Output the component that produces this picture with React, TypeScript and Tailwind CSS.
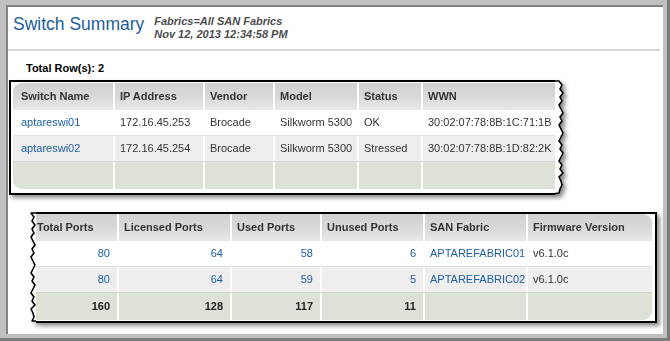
import React from "react"

const font = { fontFamily: '"Liberation Sans", Arial, sans-serif' }

const wiggle = [0, 3, 1, 4, 1, 3, 0, 2, 4, 1, 3, 0, 2, 4, 2, 0, 3, 1, 4, 2, 0, 3, 1, 4, 0, 2, 3, 1]

// torn-paper edge, drawn as a closed shape so the drop shadow follows it
function TornEdge({ height, side }: { height: number, side: "left" | "right" }) {
  const pts: string[] = []
  const steps = Math.floor(height / 4)
  for (let i = 0; i <= steps; i++) {
    const y = Math.min(1 + i * 4, height - 1)
    const o = wiggle[i % wiggle.length]
    pts.push(side === "right" ? `${4 + o},${y}` : `${1 + o},${y}`)
  }
  const inner = side === "right" ? -3 : 12
  const poly = [`${inner},1`, ...pts, `${inner},${height - 1}`].join(" ")
  return (
    <svg width={side === "right" ? 12 : 6} height={height} className="block shrink-0">
      <polygon points={poly} fill="white" stroke="black" strokeWidth="1.6" strokeLinejoin="round" />
    </svg>
  )
}

type Cell = { text: string, link?: boolean, right?: boolean, bold?: boolean }

function Grid({ cols, header, rows, footer, firstPad, rounded }: {
  cols: string, header: string[], rows: Cell[][], footer: Cell[], firstPad: string, rounded: string
}) {
  const rowClass = (i: number) => i === 0 ? "bg-white border-b border-[#e2e2e2]" : "bg-[#eeeeee] border-b border-[#d4d4d4]"
  const cellPad = (c: number) => c === 0 ? firstPad : "border-l-2 border-white"
  return (
    <div className={`overflow-hidden ${rounded}`}>
      <div className={`grid ${cols} h-[27px] bg-linear-to-b from-[#d0d0d0] via-[#d9d9d9] to-[#e8e8e8] font-bold text-[#333]`}>
        {header.map((h, c) => (
          <div key={h} className={`flex items-center ${cellPad(c)}`}><span className={c === 0 ? "" : "pl-[5px]"}>{h}</span></div>
        ))}
      </div>
      {rows.map((r, i) => (
        <div key={i} className={`grid ${cols} h-[26px] ${rowClass(i)}`}>
          {r.map((cell, c) => (
            <div key={c} className={`flex items-center ${cell.right ? "justify-end pr-[7px]" : ""} ${cellPad(c)} ${cell.link ? "text-[#1f5fa6]" : "text-[#333]"}`}>
              <span className={c === 0 || cell.right ? "" : "pl-[5px]"}>{cell.text}</span>
            </div>
          ))}
        </div>
      ))}
      <div className={`grid ${cols} h-[27px] bg-[#dde2d8]`}>
        {footer.map((cell, c) => (
          <div key={c} className={`flex items-center justify-end pr-[7px] font-bold text-[#222] ${cellPad(c)}`}>{cell.text}</div>
        ))}
      </div>
    </div>
  )
}

export default function App() {
  const switches: Cell[][] = [
    [{ text: "aptareswi01", link: true }, { text: "172.16.45.253" }, { text: "Brocade" }, { text: "Silkworm 5300" }, { text: "OK" }, { text: "30:02:07:78:8B:1C:71:1B" }],
    [{ text: "aptareswi02", link: true }, { text: "172.16.45.254" }, { text: "Brocade" }, { text: "Silkworm 5300" }, { text: "Stressed" }, { text: "30:02:07:78:8B:1D:82:2K" }],
  ]
  const ports: Cell[][] = [
    [{ text: "80", link: true, right: true }, { text: "64", link: true, right: true }, { text: "58", link: true, right: true }, { text: "6", link: true, right: true }, { text: "APTAREFABRIC01", link: true }, { text: "v6.1.0c" }],
    [{ text: "80", link: true, right: true }, { text: "64", link: true, right: true }, { text: "59", link: true, right: true }, { text: "5", link: true, right: true }, { text: "APTAREFABRIC02", link: true }, { text: "v6.1.0c" }],
  ]

  return (
    <div style={font} className="w-[670px] h-[341px] bg-[#c0c0c0] border-r-[3px] border-b-[3px] border-[#7c7c7c] pl-[6px] pt-[5px] pr-[4px] pb-[4px] text-[11px]">
      <div className="h-full bg-white border-t-2 border-l-2 border-[#838383] flex flex-col">
        <div className="h-[42px] flex items-start pt-[7px] pl-[5px]">
          <h1 className="mt-[2px] text-[17.5px] text-[#1c5e9c] leading-none">Switch Summary</h1>
          <div className="ml-[10px] mt-[1px] italic font-bold text-[#4d4d4d] text-[11px] leading-[13px]">
            <div>Fabrics=All SAN Fabrics</div>
            <div>Nov 12, 2013 12:34:58 PM</div>
          </div>
        </div>
        <div className="h-[2px] bg-[#d7d7d7] mr-[3px]" />

        <div className="pl-[18px] mt-[11px] font-bold text-black leading-[12px]">Total Row(s): 2</div>

        <div className="ml-[1px] mt-[6px] flex w-fit drop-shadow-[3px_3px_2px_rgba(0,0,0,0.45)]">
          <div className="bg-white border-l-2 border-y-2 border-black pl-[2px] pt-[1px] pb-[2px]">
            <Grid
              cols="grid-cols-[100px_90px_70px_84px_64px_134px]"
              header={["Switch Name", "IP Address", "Vendor", "Model", "Status", "WWN"]}
              rows={switches}
              footer={[{ text: "" }, { text: "" }, { text: "" }, { text: "" }, { text: "" }, { text: "" }]}
              firstPad="pl-[8px]"
              rounded="rounded-l-[9px]"
            />
          </div>
          <TornEdge height={115} side="right" />
        </div>

        <div className="ml-[22px] mt-[17px] flex w-fit drop-shadow-[3px_3px_2px_rgba(0,0,0,0.45)]">
          <TornEdge height={110} side="left" />
          <div className="bg-white border-r-2 border-y-2 border-black pr-[3px] pb-[1px]">
            <Grid
              cols="grid-cols-[81px_113px_90px_103px_103px_126px]"
              header={["Total Ports", "Licensed Ports", "Used Ports", "Unused Ports", "SAN Fabric", "Firmware Version"]}
              rows={ports}
              footer={[{ text: "160" }, { text: "128" }, { text: "117" }, { text: "11" }, { text: "" }, { text: "" }]}
              firstPad="pl-[1px]"
              rounded="rounded-r-[9px]"
            />
          </div>
        </div>
      </div>
    </div>
  )
}
